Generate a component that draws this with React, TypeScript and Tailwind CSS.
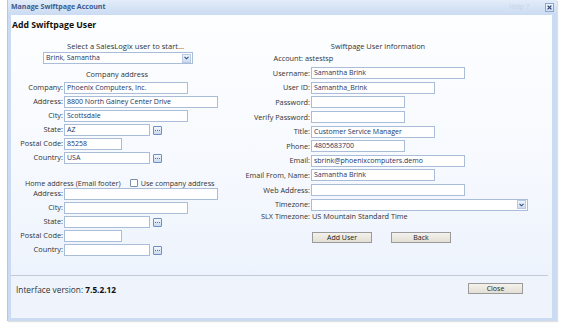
import React from "react";

const font = { fontFamily: '"Open Sans", "DejaVu Sans", sans-serif' };

function Ellipsis() {
  return (
    <div className="ml-[3px] w-[9px] h-[9px] border border-[#6f8fc0] rounded-[1px] bg-gradient-to-b from-[#f3f7fd] to-[#c9d9ef] flex items-center justify-center gap-[1px]">
      <div className="w-[1px] h-[1px] bg-[#2f9a2f]" />
      <div className="w-[1px] h-[1px] bg-[#2f9a2f]" />
      <div className="w-[1px] h-[1px] bg-[#2f9a2f]" />
    </div>
  );
}

function Chevron() {
  return (
    <div className="w-[9px] h-[9px] mr-[1px] bg-gradient-to-b from-[#eef4fc] to-[#cfdcf0] border border-[#b7c9e3] flex items-center justify-center">
      <svg width="5" height="4" viewBox="0 0 5 4">
        <path d="M0.5 0.8 L2.5 2.8 L4.5 0.8" stroke="#2d4a7c" strokeWidth="1.1" fill="none" />
      </svg>
    </div>
  );
}

function Box({ w, value }: { w: string; value?: string }) {
  return (
    <div
      className={`${w} h-[12px] border border-[#aabdd8] bg-white text-[#1e3462] text-[7px] leading-[10px] pl-[2px] whitespace-nowrap overflow-hidden`}
    >
      {value}
    </div>
  );
}

function LRow({ label, w, value, ell }: { label: string; w: string; value?: string; ell?: boolean }) {
  return (
    <div className="flex items-center h-[14px]">
      <div className="w-[52px] text-right text-[7.4px] text-[#333] whitespace-nowrap">{label}</div>
      <div className="ml-[1px] flex items-center">
        <Box w={w} value={value} />
        {ell && <Ellipsis />}
      </div>
    </div>
  );
}

function RRow({ label, w, value }: { label: string; w: string; value?: string }) {
  return (
    <div className="flex items-center h-[14.6px]">
      <div className="w-[70px] text-right text-[7.3px] text-[#333] whitespace-nowrap">{label}</div>
      <div className="ml-[1px]">
        <Box w={w} value={value} />
      </div>
    </div>
  );
}

function Btn({ label, w }: { label: string; w: string }) {
  return (
    <div
      className={`${w} h-[11px] border border-[#9a9a9a] bg-gradient-to-b from-[#f4f2ec] to-[#e3dfd5] text-[7px] leading-[9px] text-center text-[#222]`}
    >
      {label}
    </div>
  );
}

export default function App() {
  return (
    <div className="w-[562px] h-[327px] bg-white overflow-hidden" style={font}>
      <div className="ml-[7px] w-[550px] h-[321px] bg-[#cbdbf1] border-l border-[#b4c8e6] flex flex-col shadow-[1px_1px_1px_rgba(0,0,0,0.12)]">
        {/* title bar */}
        <div className="h-[15px] flex items-center bg-gradient-to-b from-[#e3ecf9] to-[#cadbf2]">
          <div className="ml-[3px] text-[7px] font-bold text-[#3a5b8f] whitespace-nowrap">Manage Swiftpage Account</div>
          <div className="flex-1" />
          <div className="text-[7px] text-[#c4d4ec] mr-[16px]">Help ?</div>
          <div className="mr-[3px] w-[9px] h-[9px] border border-[#8aa6cf] bg-gradient-to-b from-[#f2f6fc] to-[#d6e2f4] flex items-center justify-center">
            <svg width="5" height="5" viewBox="0 0 5 5">
              <path d="M0.6 0.6 L4.4 4.4 M4.4 0.6 L0.6 4.4" stroke="#2b4678" strokeWidth="1.3" />
            </svg>
          </div>
        </div>
        {/* content */}
        <div className="ml-[3px] mr-[5px] flex-1 flex flex-col bg-gradient-to-b from-[#fdfeff] via-[#f6f9fe] to-[#eaf1fc]">
          <div className="pl-[1px] pt-[4px] text-[8.7px] leading-[12px] font-bold text-[#111]">Add Swiftpage User</div>
          <div className="mt-[10px] flex h-[233px]">
            {/* left column */}
            <div className="w-[229px] flex flex-col">
              <div className="h-[11px] text-[7.6px] leading-[11px] text-[#333] text-center whitespace-nowrap">Select a SalesLogix user to start...</div>
              <div className="ml-[32px] w-[150px] h-[12px] border border-[#aabdd8] bg-white flex items-center">
                <div className="flex-1 pl-[2px] text-[7px] text-[#1e3462]">Brink, Samantha</div>
                <Chevron />
              </div>
              <div className="mt-[5px] w-[212px] h-[10px] text-center text-[7.4px] leading-[10px] text-[#333]">Company address</div>
              <div className="mt-[2px]" />
              <LRow label="Company:" w="w-[124px]" value="Phoenix Computers, Inc." />
              <LRow label="Address:" w="w-[154px]" value="8800 North Gainey Center Drive" />
              <LRow label="City:" w="w-[124px]" value="Scottsdale" />
              <LRow label="State:" w="w-[86px]" value="AZ" ell />
              <LRow label="Postal Code:" w="w-[58px]" value="85258" />
              <LRow label="Country:" w="w-[86px]" value="USA" ell />
              <div className="mt-[13px] h-[10px] ml-[14px] flex items-center text-[7.2px] text-[#333] whitespace-nowrap">
                <span>Home address (Email footer)</span>
                <div className="ml-[9px] w-[8px] h-[8px] border border-[#7e8da6] bg-white rounded-[1px]" />
                <span className="ml-[3px]">Use company address</span>
              </div>
              <div className="mt-[-1px]" />
              <LRow label="Address:" w="w-[154px]" />
              <LRow label="City:" w="w-[124px]" />
              <LRow label="State:" w="w-[86px]" ell />
              <LRow label="Postal Code:" w="w-[58px]" />
              <LRow label="Country:" w="w-[86px]" ell />
            </div>
            {/* right column */}
            <div className="flex-1 flex flex-col">
              <div className="w-[276px] h-[11px] text-[7.4px] leading-[11px] text-[#333] text-center whitespace-nowrap">Swiftpage User information</div>
              <div className="h-[12px] flex items-center text-[7.3px] text-[#333] whitespace-nowrap">
                <div className="w-[63px] text-right">Account:</div>
                <div className="ml-[2px]">astestsp</div>
              </div>
              <div className="mt-[2px]" />
              <RRow label="Username:" w="w-[154px]" value="Samantha Brink" />
              <RRow label="User ID:" w="w-[124px]" value="Samantha_Brink" />
              <RRow label="Password:" w="w-[94px]" />
              <RRow label="Verify Password:" w="w-[94px]" />
              <RRow label="Title:" w="w-[124px]" value="Customer Service Manager" />
              <RRow label="Phone:" w="w-[94px]" value="4805683700" />
              <RRow label="Email:" w="w-[154px]" value="sbrink@phoenixcomputers.demo" />
              <RRow label="Email From, Name:" w="w-[124px]" value="Samantha Brink" />
              <RRow label="Web Address:" w="w-[154px]" />
              <div className="flex items-center h-[14.6px]">
                <div className="w-[70px] text-right text-[7.3px] text-[#333]">Timezone:</div>
                <div className="ml-[1px] w-[217px] h-[12px] border border-[#aabdd8] bg-white flex items-center justify-end">
                  <Chevron />
                </div>
              </div>
              <div className="h-[10px] flex items-center text-[7.3px] text-[#333] whitespace-nowrap">
                <div className="w-[70px] text-right">SLX Timezone:</div>
                <div className="ml-[2px]">US Mountain Standard Time</div>
              </div>
              <div className="mt-[10px] ml-[72px] flex gap-[19px]">
                <Btn label="Add User" w="w-[60px]" />
                <Btn label="Back" w="w-[60px]" />
              </div>
            </div>
          </div>
          <div className="mr-[4px] h-[1px] bg-[#c3cad6] mt-auto" />
          <div className="h-[42px] bg-[#eef3fc] flex items-start">
            <div className="ml-[5px] mt-[8px] text-[8.3px] text-[#333] whitespace-nowrap">
              Interface version: <span className="font-bold text-[#111]">7.5.2.12</span>
            </div>
            <div className="flex-1" />
            <div className="mt-[7px] mr-[29px]">
              <Btn label="Close" w="w-[55px]" />
            </div>
          </div>
        </div>
        <div className="h-[3px]" />
      </div>
    </div>
  );
}
